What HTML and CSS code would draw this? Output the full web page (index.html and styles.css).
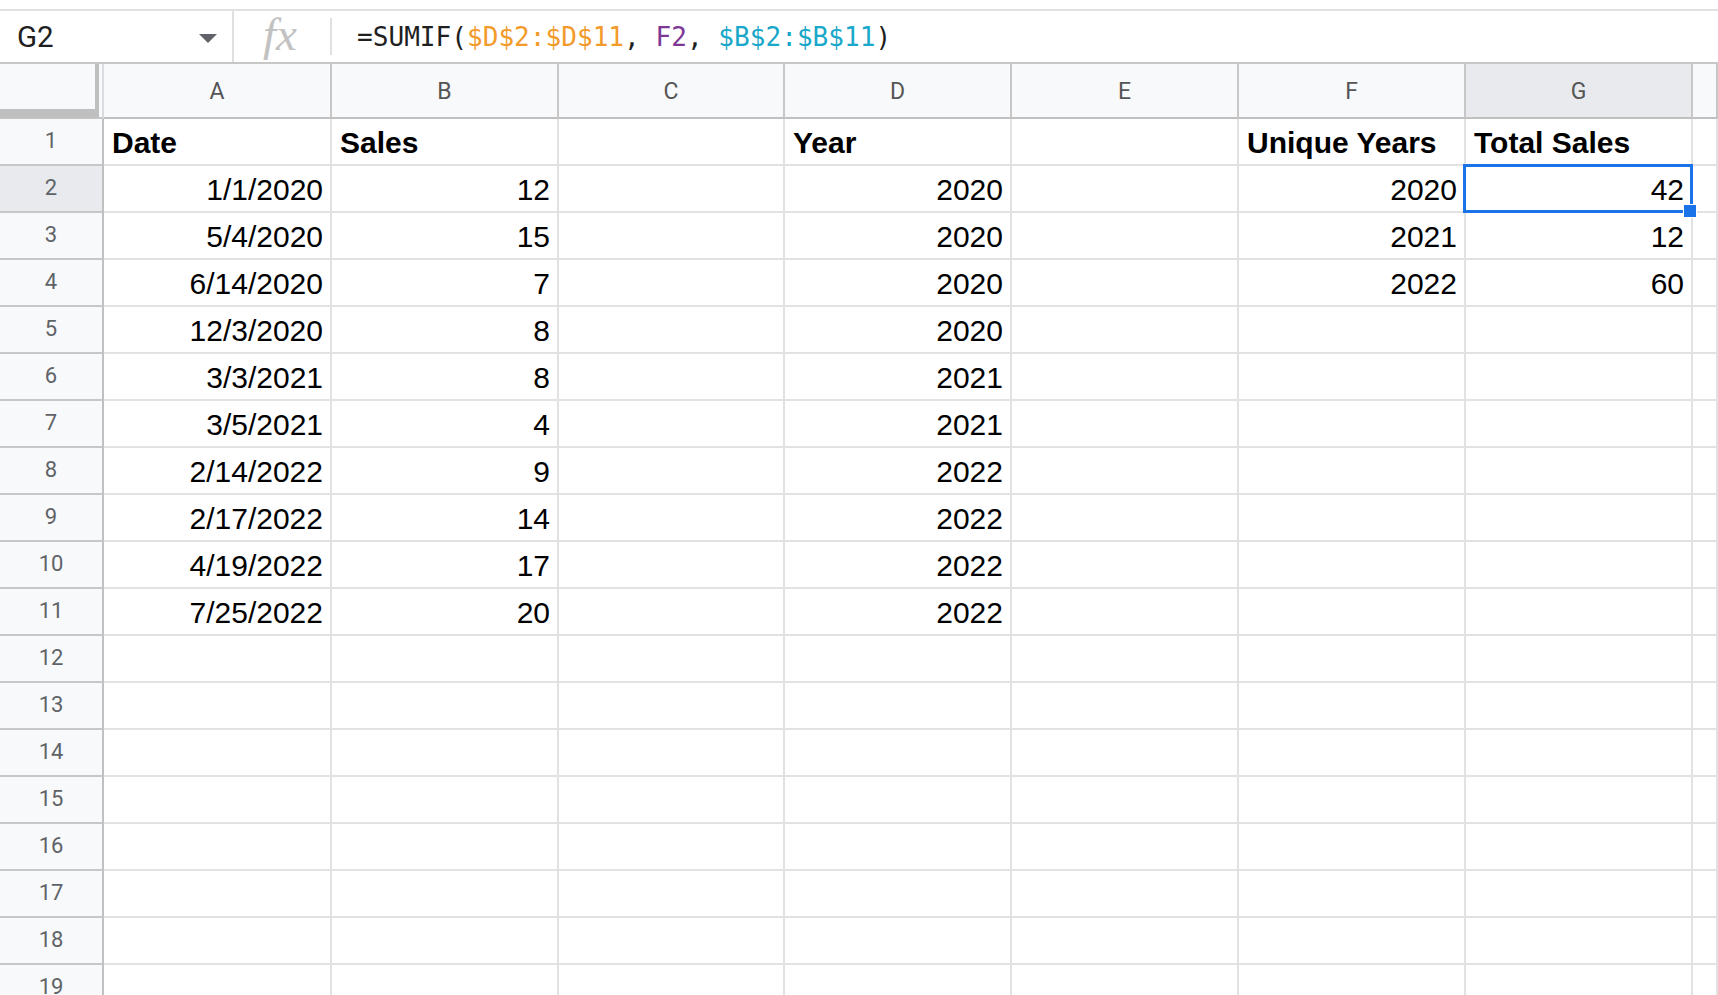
FILE: index.html
```html
<!DOCTYPE html>
<html>
<head>
<meta charset="utf-8">
<link rel="stylesheet" href="styles.css">
</head>
<body>
<div class="topline"></div>
<div class="formula-bar">
  <div class="namebox">
    <span class="name">G2</span>
    <svg class="arrow" width="18" height="9" viewBox="0 0 18 9"><path d="M0 0 L18 0 L9 9 Z" fill="#5f6368"/></svg>
  </div>
  <div class="fx">fx</div>
  <div class="formula">=SUMIF(<span class="o">$D$2:$D$11</span>, <span class="p">F2</span>, <span class="t">$B$2:$B$11</span>)</div>
</div>
<div class="grid">
  <div class="corner"><div class="freeze"></div></div>
  <div class="ch">A</div><div class="ch">B</div><div class="ch">C</div><div class="ch">D</div><div class="ch">E</div><div class="ch">F</div><div class="ch sel">G</div><div class="ch"></div>

  <div class="rh">1</div><div class="c b">Date</div><div class="c b">Sales</div><div class="c"></div><div class="c b">Year</div><div class="c"></div><div class="c b">Unique Years</div><div class="c b">Total Sales</div><div class="c"></div>
  <div class="rh sel">2</div><div class="c r">1/1/2020</div><div class="c r">12</div><div class="c"></div><div class="c r">2020</div><div class="c"></div><div class="c r">2020</div><div class="c r active">42<span class="handle"></span></div><div class="c"></div>
  <div class="rh">3</div><div class="c r">5/4/2020</div><div class="c r">15</div><div class="c"></div><div class="c r">2020</div><div class="c"></div><div class="c r">2021</div><div class="c r">12</div><div class="c"></div>
  <div class="rh">4</div><div class="c r">6/14/2020</div><div class="c r">7</div><div class="c"></div><div class="c r">2020</div><div class="c"></div><div class="c r">2022</div><div class="c r">60</div><div class="c"></div>
  <div class="rh">5</div><div class="c r">12/3/2020</div><div class="c r">8</div><div class="c"></div><div class="c r">2020</div><div class="c"></div><div class="c"></div><div class="c"></div><div class="c"></div>
  <div class="rh">6</div><div class="c r">3/3/2021</div><div class="c r">8</div><div class="c"></div><div class="c r">2021</div><div class="c"></div><div class="c"></div><div class="c"></div><div class="c"></div>
  <div class="rh">7</div><div class="c r">3/5/2021</div><div class="c r">4</div><div class="c"></div><div class="c r">2021</div><div class="c"></div><div class="c"></div><div class="c"></div><div class="c"></div>
  <div class="rh">8</div><div class="c r">2/14/2022</div><div class="c r">9</div><div class="c"></div><div class="c r">2022</div><div class="c"></div><div class="c"></div><div class="c"></div><div class="c"></div>
  <div class="rh">9</div><div class="c r">2/17/2022</div><div class="c r">14</div><div class="c"></div><div class="c r">2022</div><div class="c"></div><div class="c"></div><div class="c"></div><div class="c"></div>
  <div class="rh">10</div><div class="c r">4/19/2022</div><div class="c r">17</div><div class="c"></div><div class="c r">2022</div><div class="c"></div><div class="c"></div><div class="c"></div><div class="c"></div>
  <div class="rh">11</div><div class="c r">7/25/2022</div><div class="c r">20</div><div class="c"></div><div class="c r">2022</div><div class="c"></div><div class="c"></div><div class="c"></div><div class="c"></div>
  <div class="rh">12</div><div class="c"></div><div class="c"></div><div class="c"></div><div class="c"></div><div class="c"></div><div class="c"></div><div class="c"></div><div class="c"></div>
  <div class="rh">13</div><div class="c"></div><div class="c"></div><div class="c"></div><div class="c"></div><div class="c"></div><div class="c"></div><div class="c"></div><div class="c"></div>
  <div class="rh">14</div><div class="c"></div><div class="c"></div><div class="c"></div><div class="c"></div><div class="c"></div><div class="c"></div><div class="c"></div><div class="c"></div>
  <div class="rh">15</div><div class="c"></div><div class="c"></div><div class="c"></div><div class="c"></div><div class="c"></div><div class="c"></div><div class="c"></div><div class="c"></div>
  <div class="rh">16</div><div class="c"></div><div class="c"></div><div class="c"></div><div class="c"></div><div class="c"></div><div class="c"></div><div class="c"></div><div class="c"></div>
  <div class="rh">17</div><div class="c"></div><div class="c"></div><div class="c"></div><div class="c"></div><div class="c"></div><div class="c"></div><div class="c"></div><div class="c"></div>
  <div class="rh">18</div><div class="c"></div><div class="c"></div><div class="c"></div><div class="c"></div><div class="c"></div><div class="c"></div><div class="c"></div><div class="c"></div>
  <div class="rh">19</div><div class="c"></div><div class="c"></div><div class="c"></div><div class="c"></div><div class="c"></div><div class="c"></div><div class="c"></div><div class="c"></div>
</div>
</body>
</html>
```

FILE: styles.css
```css
* { box-sizing: border-box; }
html, body {
  margin: 0;
  padding: 0;
  background: #fff;
  width: 1718px;
  height: 995px;
  overflow: hidden;
}
body {
  font-family: "Liberation Sans", Arial, sans-serif;
  color: #000;
}
.topline {
  height: 11px;
  border-bottom: 2px solid #e1e1e1;
}
.formula-bar {
  display: flex;
  align-items: center;
  height: 53px;
  border-bottom: 2px solid #c7c7c7;
}
.namebox {
  width: 234px;
  height: 100%;
  display: flex;
  align-items: center;
  justify-content: space-between;
  padding: 0 15px 0 17px;
  border-right: 2px solid #e0e0e0;
}
.name {
  font-family: Roboto, "Liberation Sans", sans-serif;
  font-size: 29.5px;
  color: #1f1f1f;
  padding-top: 1px;
}
.arrow { display: block; margin-top: 4px; }
.fx {
  width: 98px;
  height: 37px;
  display: flex;
  align-items: center;
  justify-content: center;
  border-right: 2px solid #e0e0e0;
  font-family: "Liberation Serif", "Times New Roman", serif;
  font-style: italic;
  font-size: 47px;
  color: #c2c2c2;
  line-height: 1;
  padding-bottom: 4px;
  padding-right: 4px;
}
.formula {
  padding-left: 25px;
  font-family: "DejaVu Sans Mono", monospace;
  font-size: 26.1px;
  color: #1f1f1f;
  white-space: pre;
}
.o { color: #f29b2b; }
.p { color: #7e3794; }
.t { color: #19a8c9; }

.grid {
  display: grid;
  grid-template-columns: 104px 228px 227px 226px 227px 227px 227px 227px 1fr;
  grid-template-rows: 55px repeat(19, 47px);
}
.corner {
  background: #f8f9fa;
  border-right: 2px solid #dadce0;
  border-bottom: 2px solid #c7c7c7;
}
.freeze {
  width: 99px;
  height: 54px;
  border-right: 4px solid #bfbfbf;
  border-bottom: 9px solid #bfbfbf;
}
.ch {
  background: #f8f9fa;
  border-right: 2px solid #c7c7c7;
  border-bottom: 2px solid #c0c0c0;
  display: flex;
  align-items: center;
  justify-content: center;
  font-family: Roboto, "Liberation Sans", sans-serif;
  font-size: 23px;
  color: #555;
  padding-top: 2px;
}
.ch.sel, .rh.sel { background: #e8eaed; }
.rh {
  background: #f8f9fa;
  border-right: 2px solid #c0c0c0;
  border-bottom: 2px solid #c7c7c7;
  display: flex;
  align-items: center;
  justify-content: center;
  font-family: Roboto, "Liberation Sans", sans-serif;
  font-size: 22px;
  color: #5f6368;
  padding-bottom: 2px;
}
.c {
  border-right: 2px solid #e2e2e2;
  border-bottom: 2px solid #e2e2e2;
  display: flex;
  align-items: flex-end;
  padding: 0 7px 4px 8px;
  font-size: 30px;
  line-height: 34px;
  white-space: nowrap;
}
.c.r { justify-content: flex-end; }
.c.b { font-weight: bold; }
.c.active { position: relative; }
.c.active::after {
  content: "";
  position: absolute;
  left: -3px;
  top: -2px;
  right: -2px;
  bottom: -2px;
  border: 3px solid #1a73e8;
}
.handle {
  position: absolute;
  right: -6px;
  bottom: -7px;
  width: 14px;
  height: 14px;
  background: #1a73e8;
  border: 1px solid #fff;
  z-index: 2;
}
```
